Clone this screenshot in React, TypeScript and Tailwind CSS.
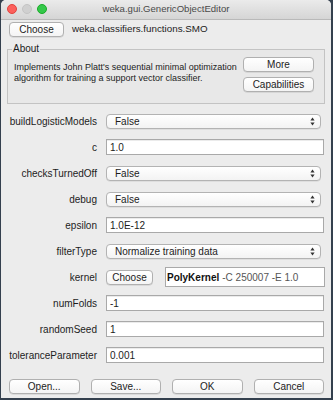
import React from 'react'

const font = { fontFamily: '"Liberation Sans", Arial, sans-serif' }

const Arrows = () => (
  <svg width="5" height="9" viewBox="0 0 5 9" className="shrink-0">
    <path d="M2.5 0.5 L4.6 3.6 L0.4 3.6 Z" fill="#333" />
    <path d="M2.5 8.5 L4.6 5.4 L0.4 5.4 Z" fill="#333" />
  </svg>
)

const Select = ({ value }: { value: string }) => (
  <div className="flex h-[15px] w-[215px] items-center justify-between rounded-[4px] border border-[#b3b3b3] bg-gradient-to-b from-white to-[#f3f3f3] pl-[8px] pr-[5px] text-[10px] text-[#1c1c1c] shadow-[0_0.5px_0.5px_rgba(0,0,0,0.12)]">
    <span>{value}</span>
    <Arrows />
  </div>
)

const Field = ({ value }: { value: string }) => (
  <div className="flex h-[16px] w-[218px] items-center border border-[#a9a9a9] bg-white pl-[3px] text-[10px] text-[#1c1c1c] shadow-[inset_0_1px_0_rgba(0,0,0,0.08)]">
    {value}
  </div>
)

const Button = ({ label, className = '' }: { label: string; className?: string }) => (
  <button
    className={`flex h-[15px] items-center justify-center rounded-[4px] border border-[#b0b0b0] bg-gradient-to-b from-white to-[#f4f4f4] text-[10px] text-[#1c1c1c] shadow-[0_0.5px_0.5px_rgba(0,0,0,0.15)] ${className}`}
  >
    {label}
  </button>
)

interface Row {
  name: string
  kind: 'select' | 'field' | 'kernel'
  value: string
}

const rows: Row[] = [
  { name: 'buildLogisticModels', kind: 'select', value: 'False' },
  { name: 'c', kind: 'field', value: '1.0' },
  { name: 'checksTurnedOff', kind: 'select', value: 'False' },
  { name: 'debug', kind: 'select', value: 'False' },
  { name: 'epsilon', kind: 'field', value: '1.0E-12' },
  { name: 'filterType', kind: 'select', value: 'Normalize training data' },
  { name: 'kernel', kind: 'kernel', value: '' },
  { name: 'numFolds', kind: 'field', value: '-1' },
  { name: 'randomSeed', kind: 'field', value: '1' },
  { name: 'toleranceParameter', kind: 'field', value: '0.001' },
]

export default function App() {
  return (
    <div className="h-[400px] w-[333px] bg-[#34404e]" style={font}>
      <div className="ml-[1px] flex h-[398px] w-[330px] flex-col overflow-hidden rounded-t-[5px] bg-[#ececec]">
        {/* title bar */}
        <div className="relative flex h-[20px] shrink-0 items-center justify-center border-b border-[#b9b9b9] bg-gradient-to-b from-[#ebebeb] to-[#d5d5d5]">
          <div className="absolute left-[6px] top-[4px] flex gap-[5px]">
            <span className="h-[10px] w-[10px] rounded-full border border-[#e0443e] bg-[#fc605c]" />
            <span className="h-[10px] w-[10px] rounded-full border border-[#c4c4c4] bg-[#d0d0d0]" />
            <span className="h-[10px] w-[10px] rounded-full border border-[#1aab29] bg-[#34c84a]" />
          </div>
          <span className="text-[9.6px] text-[#4a4a4a]">weka.gui.GenericObjectEditor</span>
        </div>

        {/* chooser */}
        <div className="mt-[2px] flex items-center gap-[8px] pl-[8px]">
          <Button label="Choose" className="w-[55px]" />
          <span className="text-[9.8px] text-[#1c1c1c]">weka.classifiers.functions.SMO</span>
        </div>

        {/* about */}
        <fieldset className="mx-[6px] mt-[7px] h-[60px] border border-[#c3c3c3] bg-[#e8e8e8] px-[6px]">
          <legend className="ml-[-2px] px-[1px] text-[10px] leading-[10px] text-[#1c1c1c]">About</legend>
          <div className="flex items-start justify-between pt-[3px]">
            <p className="mt-[5px] text-[9px] leading-[11px] text-[#1c1c1c]">
              Implements John Platt's sequential minimal optimization
              <br />
              algorithm for training a support vector classifier.
            </p>
            <div className="flex flex-col gap-[5px] pr-[4px]">
              <Button label="More" className="w-[71px]" />
              <Button label="Capabilities" className="w-[71px]" />
            </div>
          </div>
        </fieldset>

        {/* properties */}
        <div className="mt-[4px] flex flex-col">
          {rows.map((row) => (
            <div key={row.name} className="flex h-[26px] items-center">
              <div className="w-[96px] shrink-0 text-right text-[10px] text-[#1c1c1c]">{row.name}</div>
              <div className="ml-[9px]">
                {row.kind === 'select' && <Select value={row.value} />}
                {row.kind === 'field' && <Field value={row.value} />}
                {row.kind === 'kernel' && (
                  <div className="flex items-center gap-[12px]">
                    <Button label="Choose" className="w-[47px]" />
                    <div className="flex h-[20px] w-[160px] items-center border border-[#a9a9a9] bg-white pl-[1px] text-[10px]">
                      <span className="font-bold text-[#111]">PolyKernel</span>
                      <span className="ml-[3px] text-[#555]">-C 250007 -E 1.0</span>
                    </div>
                  </div>
                )}
              </div>
            </div>
          ))}
        </div>

        {/* footer */}
        <div className="mt-[11px] grid grid-cols-4 gap-[11px] pl-[8px] pr-[7px]">
          <Button label="Open..." />
          <Button label="Save..." />
          <Button label="OK" />
          <Button label="Cancel" />
        </div>
      </div>
    </div>
  )
}
